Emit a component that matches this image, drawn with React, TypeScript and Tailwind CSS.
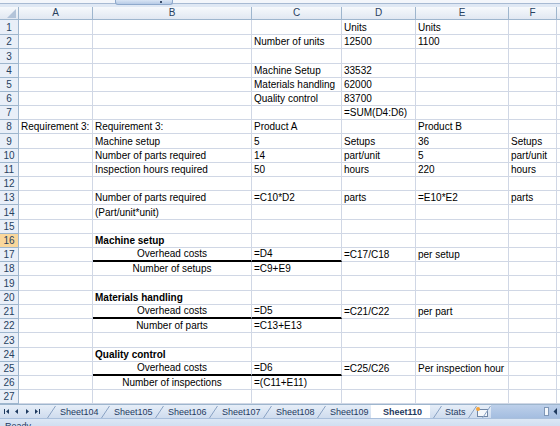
import React from "react";

type Cell = { t: string; bold?: boolean; center?: boolean; thick?: boolean };
type Row = Partial<Record<"A" | "B" | "C" | "D" | "E" | "F", Cell>>;

const cols: { key: "A" | "B" | "C" | "D" | "E" | "F"; w: string }[] = [
  { key: "A", w: "w-[74px]" },
  { key: "B", w: "w-[159px]" },
  { key: "C", w: "w-[90px]" },
  { key: "D", w: "w-[74px]" },
  { key: "E", w: "w-[93px]" },
  { key: "F", w: "w-[48px]" },
];

const rowHeights = [15, 14, 15, 14, 14, 14, 14, 14, 15, 14, 14, 14, 14, 15, 14, 14, 14, 14, 15, 14, 14, 14, 15, 14, 14, 14, 14];

const c = (t: string, o: Partial<Cell> = {}): Cell => ({ t, ...o });

const data: Row[] = [
  { D: c("Units"), E: c("Units") },
  { C: c("Number of units"), D: c("12500"), E: c("1100") },
  {},
  { C: c("Machine Setup"), D: c("33532") },
  { C: c("Materials handling"), D: c("62000") },
  { C: c("Quality control"), D: c("83700") },
  { D: c("=SUM(D4:D6)") },
  { A: c("Requirement 3:"), B: c("Requirement 3:"), C: c("Product A"), E: c("Product B") },
  { B: c("Machine setup"), C: c("5"), D: c("Setups"), E: c("36"), F: c("Setups") },
  { B: c("Number of parts required"), C: c("14"), D: c("part/unit"), E: c("5"), F: c("part/unit") },
  { B: c("Inspection hours required"), C: c("50"), D: c("hours"), E: c("220"), F: c("hours") },
  {},
  { B: c("Number of parts required"), C: c("=C10*D2"), D: c("parts"), E: c("=E10*E2"), F: c("parts") },
  { B: c("(Part/unit*unit)") },
  {},
  { B: c("Machine setup", { bold: true }) },
  { B: c("Overhead costs", { center: true, thick: true }), C: c("=D4", { thick: true }), D: c("=C17/C18"), E: c("per setup") },
  { B: c("Number of setups", { center: true }), C: c("=C9+E9") },
  {},
  { B: c("Materials handling", { bold: true }) },
  { B: c("Overhead costs", { center: true, thick: true }), C: c("=D5", { thick: true }), D: c("=C21/C22"), E: c("per part") },
  { B: c("Number of parts", { center: true }), C: c("=C13+E13") },
  {},
  { B: c("Quality control", { bold: true }) },
  { B: c("Overhead costs", { center: true, thick: true }), C: c("=D6", { thick: true }), D: c("=C25/C26"), E: c("Per inspection hour") },
  { B: c("Number of inspections", { center: true }), C: c("=(C11+E11)") },
  {},
];

const tabs = ["Sheet104", "Sheet105", "Sheet106", "Sheet107", "Sheet108", "Sheet109"];

function Slash() {
  return (
    <svg width="9" height="13" viewBox="0 0 9 13" className="shrink-0">
      <line x1="0.5" y1="13" x2="8.5" y2="1" stroke="#8aa3c4" strokeWidth="1" />
    </svg>
  );
}

export default function App() {
  return (
    <div className="w-[560px] h-[426px] overflow-hidden bg-white flex flex-col font-['Liberation_Sans',Arial,sans-serif] text-[10px] text-black relative">
      {/* top strip */}
      <div className="h-[7px] shrink-0 flex flex-col relative">
        <div className="h-[3px] bg-[#f3f6fb]" />
        <div className="h-[1px] bg-[#a7bad3]" />
        <div className="h-[3px] bg-[#dfe8f4]" />
        <div className="absolute left-[115px] top-0 w-[58px] h-[5px] rounded-b-[3px] border border-t-0 border-[#8ea9cc] bg-gradient-to-b from-[#d9e5f4] to-[#b7cbe6]">
          <div className="absolute left-[44px] top-[1px] w-[2px] h-[2px] bg-[#3b4f6b]" />
        </div>
      </div>
      {/* column header */}
      <div className="h-[13px] shrink-0 flex bg-gradient-to-b from-[#f6f9fc] to-[#e1e8f2] border-b border-[#9eb6ce] text-[#27415f]">
        <div className="w-[19px] shrink-0 border-r border-[#9eb6ce] relative">
          <svg width="9" height="9" viewBox="0 0 9 9" className="absolute right-[2px] bottom-[1px]">
            <polygon points="9,0 9,9 0,9" fill="#b3c4d9" />
          </svg>
        </div>
        {cols.map((col) => (
          <div key={col.key} className={`${col.w} shrink-0 border-r border-[#9eb6ce] flex items-center justify-center leading-[12px]`}>
            {col.key}
          </div>
        ))}
        <div className="flex-1" />
      </div>
      {/* rows */}
      <div className="flex flex-col shrink-0">
        {data.map((row, i) => {
          const h = rowHeights[i];
          const sel = i === 15;
          return (
            <div key={i} className="flex" style={{ height: h }}>
              <div
                className={`w-[19px] shrink-0 border-r border-b border-[#9eb6ce] flex items-end justify-center leading-[12px] text-[#27415f] ${
                  sel ? "bg-[#f9d79c]" : "bg-[#e9eff8]"
                }`}
              >
                {i + 1}
              </div>
              {cols.map((col) => {
                const cell = row[col.key];
                return (
                  <div
                    key={col.key}
                    className={`${col.w} shrink-0 border-r border-[#d0d7e5] flex items-end leading-[12px] whitespace-nowrap relative ${
                      cell?.thick ? "border-b-2 border-b-black" : "border-b"
                    } ${cell?.center ? "justify-center" : "pl-[2px]"} ${cell?.bold ? "font-bold" : ""}`}
                  >
                    {cell?.t}
                  </div>
                );
              })}
              <div className="flex-1 border-b border-[#d0d7e5]" />
            </div>
          );
        })}
      </div>
      {/* sheet tab bar */}
      <div className="h-[14px] shrink-0 flex border-t border-[#9eb6ce] bg-gradient-to-b from-[#e6eef8] to-[#cfdcee] text-[9px] text-[#1f3a5f]">
        <div className="w-[47px] shrink-0 flex items-center">
          <svg width="47" height="13" viewBox="0 0 47 13">
            <rect x="4" y="4" width="1" height="5" fill="#1f3a5f" />
            <polygon points="9,4 9,9 6,6.5" fill="#1f3a5f" />
            <polygon points="18,4 18,9 15,6.5" fill="#1f3a5f" />
            <polygon points="26,4 26,9 29,6.5" fill="#1f3a5f" />
            <polygon points="35,4 35,9 38,6.5" fill="#1f3a5f" />
            <rect x="39" y="4" width="1" height="5" fill="#1f3a5f" />
          </svg>
        </div>
        {tabs.map((t) => (
          <div key={t} className="w-[54px] shrink-0 flex items-end">
            <Slash />
            <span className="ml-[4px] leading-[12px]">{t}</span>
          </div>
        ))}
        <div className="w-[62px] shrink-0 flex items-end">
          <div className="h-[13px] flex items-center bg-white pl-[12px] pr-[8px] font-bold text-[#1f3a5f] relative -mt-[1px]">
            <span className="leading-[12px]">Sheet110</span>
          </div>
        </div>
        <div className="w-[35px] shrink-0 flex items-end">
          <Slash />
          <span className="ml-[3px] leading-[12px]">Stats</span>
        </div>
        <div className="w-[23px] shrink-0 flex items-end">
          <svg width="23" height="13" viewBox="0 0 23 13">
            <line x1="0.5" y1="13" x2="8.5" y2="1" stroke="#8aa3c4" strokeWidth="1" />
            <rect x="9.5" y="4.5" width="10" height="7" fill="#f4f7fb" stroke="#6f86a6" strokeWidth="1" />
            <circle cx="10" cy="4" r="2" fill="#f2a23a" />
            <line x1="14.5" y1="13" x2="22.5" y2="1" stroke="#8aa3c4" strokeWidth="1" />
          </svg>
        </div>
        <div className="flex-1 flex items-center justify-end bg-gradient-to-b from-[#bdd0ea] to-[#a4bde0] pr-[2px] gap-[4px]">
          <div className="w-[5px] h-[9px] bg-[#f5f8fc] border border-[#7f97b7]" />
          <svg width="5" height="7" viewBox="0 0 5 7">
            <polygon points="4,0 4,7 0.5,3.5" fill="#1f3a5f" />
          </svg>
        </div>
      </div>
      {/* status bar */}
      <div className="flex-1 bg-gradient-to-b from-[#dce7f5] to-[#c6d7ed] border-t border-[#a9bfdc] text-[9px] text-[#1f3a5f] pl-[5px] pt-[1px] leading-[12px]">
        Ready
      </div>
    </div>
  );
}
